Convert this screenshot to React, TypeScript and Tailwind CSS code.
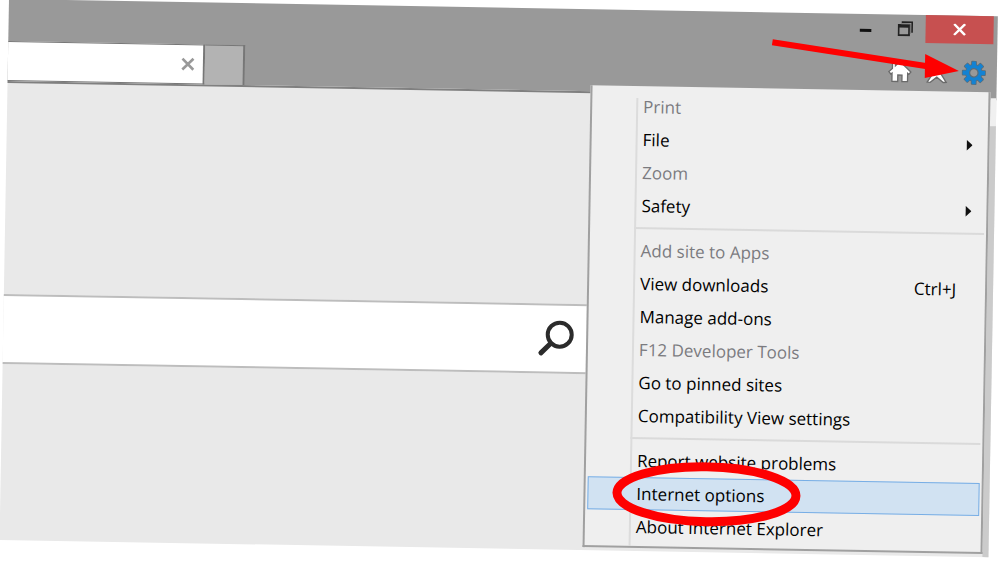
import React from "react";

type Item = {
  label: string;
  disabled?: boolean;
  submenu?: boolean;
  shortcut?: string;
  selected?: boolean;
};

const groups: Item[][] = [
  [
    { label: "Print", disabled: true },
    { label: "File", submenu: true },
    { label: "Zoom", disabled: true },
    { label: "Safety", submenu: true },
  ],
  [
    { label: "Add site to Apps", disabled: true },
    { label: "View downloads", shortcut: "Ctrl+J" },
    { label: "Manage add-ons" },
    { label: "F12 Developer Tools", disabled: true },
    { label: "Go to pinned sites" },
    { label: "Compatibility View settings" },
  ],
  [
    { label: "Report website problems" },
    { label: "Internet options", selected: true },
    { label: "About Internet Explorer" },
  ],
];

function WindowControls() {
  return (
    <div className="flex h-7 pr-1">
      <button aria-label="Minimize" className="flex w-10 items-center justify-center">
        <svg width="12" height="12" viewBox="0 0 12 12">
          <rect x="0" y="7" width="12" height="3" fill="#111" />
        </svg>
      </button>
      <button aria-label="Restore" className="flex w-10 items-center justify-center">
        <svg width="16" height="16" viewBox="0 0 16 16" fill="none" stroke="#222">
          <path d="M4 1.5H14.5V12" strokeWidth="1.6" />
          <rect x="1" y="4.5" width="10.5" height="10" strokeWidth="1.8" />
          <path d="M1 6H11.5" strokeWidth="2" />
          <path d="M3.5 3.5H12.5V13" strokeWidth="0.8" stroke="#555" />
        </svg>
      </button>
      <button aria-label="Close" className="flex w-[68px] items-center justify-center bg-[#c75050]">
        <svg width="14" height="12" viewBox="0 0 14 12" stroke="#fff" strokeWidth="2.4">
          <path d="M1.5 0.5L12.5 11.5M12.5 0.5L1.5 11.5" />
        </svg>
      </button>
    </div>
  );
}

function Toolbar() {
  return (
    <div className="flex items-center gap-3 pr-2.5">
      <button aria-label="Home">
        <svg width="26" height="26" viewBox="0 0 26 26">
          <path
            d="M13 3L24 13.2L22 15.6L20.8 14.6V23H15.2V16.5H11V23H5.2V14.6L4 15.6L2 13.2L5.5 10V4H8.5V7.2Z"
            fill="#fff"
            stroke="#6a6a6a"
            strokeWidth="1.3"
          />
        </svg>
      </button>
      <button aria-label="Favorites">
        <svg width="24" height="26" viewBox="0 0 24 26">
          <path
            d="M12 3L14.6 10.2H22L16.2 14.8L21.5 23L18.5 23.2L12 18L5.5 23.2L2.5 23L7.8 14.8L2 10.2H9.4Z"
            fill="#fff"
            stroke="#6a6a6a"
            strokeWidth="1.3"
          />
        </svg>
      </button>
      <button aria-label="Tools">
        <svg width="26" height="26" viewBox="-13 -13 26 26">
          {[0, 45, 90, 135].map((a) => (
            <rect key={a} x="-2.9" y="-12" width="5.8" height="24" rx="1" fill="#5d6d78" transform={`rotate(${a})`} />
          ))}
          <circle r="8.8" fill="#5d6d78" />
          {[0, 45, 90, 135].map((a) => (
            <rect key={a} x="-2.1" y="-11.3" width="4.2" height="22.6" rx="0.8" fill="#1482d2" transform={`rotate(${a})`} />
          ))}
          <circle r="8" fill="#1482d2" />
          <circle r="4.2" fill="#999" stroke="#5d6d78" strokeWidth="1.2" />
        </svg>
      </button>
    </div>
  );
}

function MenuRow({ item }: { item: Item }) {
  return (
    <li className={item.selected ? "relative z-10" : ""}>
      <button
        disabled={item.disabled}
        className={
          "relative flex h-[33px] w-full items-center border pr-[26px] pl-12 text-left whitespace-nowrap " +
          (item.selected ? "border-[#78aee5] bg-[#d1e2f2] " : "border-transparent ") +
          (item.disabled ? "text-[#7b7b7f]" : "text-black")
        }
      >
        <span className="flex-1">{item.label}</span>
        {item.shortcut && <span>{item.shortcut}</span>}
        {item.submenu && (
          <svg className="-mr-3.5" width="6" height="11" viewBox="0 0 6 11">
            <path d="M0 0L6 5.5L0 11Z" fill="#111" />
          </svg>
        )}
      </button>
      {item.selected && (
        <svg
          className="pointer-events-none absolute top-1/2 left-6 -translate-y-1/2"
          width="190"
          height="66"
          viewBox="0 0 190 66"
        >
          <ellipse cx="95" cy="32" rx="89.5" ry="27.5" fill="none" stroke="#fe0000" strokeWidth="9" />
        </svg>
      )}
    </li>
  );
}

function ToolsMenu() {
  return (
    <nav
      aria-label="Tools"
      className="absolute top-[76px] right-1.5 w-[400px] border-x-2 border-b-2 border-[#a0a0a0] bg-[#efefef] px-0.5 pt-1 pb-[3px] text-[17px] leading-6"
    >
      <div className="absolute top-3 bottom-0 left-11 w-0.5 bg-[#dcdcdc]" />
      {groups.map((group, i) => (
        <React.Fragment key={i}>
          {i > 0 && <hr className="my-[5px] ml-[42px] border-t-2 border-[#dadada]" />}
          <ul>
            {group.map((item) => (
              <MenuRow key={item.label} item={item} />
            ))}
          </ul>
        </React.Fragment>
      ))}
    </nav>
  );
}

export default function App() {
  return (
    <div className="min-h-screen overflow-hidden bg-white pr-0.5 pl-[9px] font-['Open_Sans','Noto_Sans',sans-serif]">
      <div className="relative -mt-px origin-top-left rotate-1">
        <header className="relative bg-[#999]">
          <div className="flex h-[42px] justify-end">
            <WindowControls />
          </div>
          <div className="flex h-10 items-stretch">
            <div className="flex flex-1">
              <div className="flex w-[197px] items-center justify-end border-y border-r-2 border-[#777] bg-white pr-2">
                <button aria-label="Close tab">
                  <svg width="14" height="14" viewBox="0 0 14 14" stroke="#999" strokeWidth="2.6">
                    <path d="M1.5 1.5L12.5 12.5M12.5 1.5L1.5 12.5" />
                  </svg>
                </button>
              </div>
              <button aria-label="New tab" className="w-10 border-t border-r-2 border-[#777] bg-[#b3b3b3]" />
              <div className="flex-1" />
            </div>
            <div className="flex pb-2.5">
              <Toolbar />
            </div>
          </div>
          <svg className="pointer-events-none absolute top-6 right-[38px]" width="190" height="44" viewBox="0 0 190 44">
            <path d="M3 6L160 27.5" stroke="#fe0000" strokeWidth="6" />
            <path d="M156 15L190 31.5L156 39Z" fill="#fe0000" />
          </svg>
        </header>
        <main className="border-t-2 border-[#808080] bg-[#e9e9e9] pt-[211px] pb-44">
          <div className="mr-[404px] flex h-[70px] items-center border-y-2 border-[#bdbdbd] bg-white">
            <input aria-label="Search" className="h-full min-w-0 flex-1 bg-transparent px-4 outline-none" />
            <button aria-label="Search" className="mr-3.5">
              <svg width="36" height="38" viewBox="0 0 36 38" fill="none" stroke="#2b2b2b">
                <circle cx="21.5" cy="15" r="12" strokeWidth="4" />
                <path d="M12.5 24L3 33.5" strokeWidth="5" strokeLinecap="round" />
              </svg>
            </button>
          </div>
        </main>
        <div className="absolute top-[82px] right-0 bottom-0 flex w-1.5 flex-col">
          <div className="h-7 bg-[#f0f0f0]" />
          <div className="flex-1 bg-[#cbcbcb]" />
        </div>
        <ToolsMenu />
      </div>
    </div>
  );
}
